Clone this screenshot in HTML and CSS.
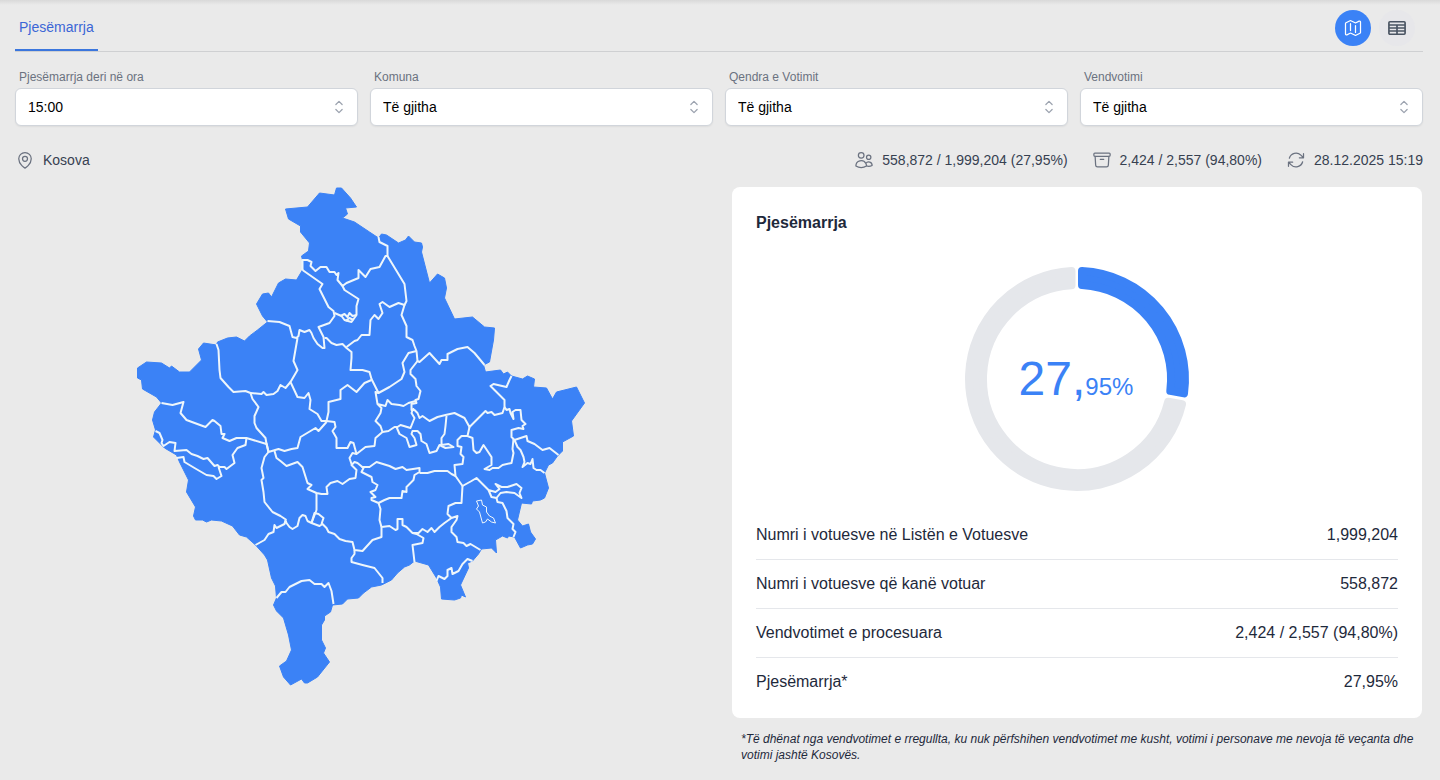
FILE: index.html
```html
<!DOCTYPE html>
<html lang="sq">
  <head>
    <meta charset="UTF-8" />
    <meta name="viewport" content="width=device-width, initial-scale=1.0" />
    <title>Pjesëmarrja</title>
    <link rel="stylesheet" href="styles.css">
  </head>
  <body>
    <div class="page">
      <header class="topbar">
        <nav class="tabs">
          <a href="#" class="tab active">Pjesëmarrja</a>
        </nav>
        <div class="view-buttons">
          <button type="button" class="view-btn active" aria-label="Harta">
            <svg class="icon" viewBox="0 0 24 24"><path d="M9 6.75V15m6-6v8.25m.503 3.498 4.875-2.437c.381-.19.622-.58.622-1.006V4.82c0-.836-.88-1.38-1.628-1.006l-3.869 1.934c-.317.159-.69.159-1.006 0L9.503 3.252a1.125 1.125 0 0 0-1.006 0L3.622 5.689C3.24 5.88 3 6.27 3 6.695V19.18c0 .836.88 1.38 1.628 1.006l3.869-1.934c.317-.159.69-.159 1.006 0l4.994 2.497c.317.158.69.158 1.006 0Z" /></svg>
          </button>
          <button type="button" class="view-btn table-btn" aria-label="Tabela">
            <svg class="icon" viewBox="0 0 24 24"><path d="M3.5 4.5h17a1.2 1.2 0 0 1 1.2 1.2v12.6a1.2 1.2 0 0 1-1.2 1.2h-17a1.2 1.2 0 0 1-1.2-1.2V5.7a1.2 1.2 0 0 1 1.2-1.2ZM2.5 8.4h19M2.500 12h19M2.500 15.6h19M12 8.4v11" /></svg>
          </button>
        </div>
      </header>

      <form class="filters">
        <div class="field">
          <label for="ora">Pjesëmarrja deri në ora</label>
          <div class="select-wrap">
            <select id="ora"><option>15:00</option></select>
            <svg class="icon chevron" viewBox="0 0 24 24"><path d="M8.25 15 12 18.75 15.75 15m-7.5-6L12 5.25 15.75 9" /></svg>
          </div>
        </div>
        <div class="field">
          <label for="komuna">Komuna</label>
          <div class="select-wrap">
            <select id="komuna"><option>Të gjitha</option></select>
            <svg class="icon chevron" viewBox="0 0 24 24"><path d="M8.25 15 12 18.75 15.75 15m-7.5-6L12 5.25 15.75 9" /></svg>
          </div>
        </div>
        <div class="field">
          <label for="qendra">Qendra e Votimit</label>
          <div class="select-wrap">
            <select id="qendra"><option>Të gjitha</option></select>
            <svg class="icon chevron" viewBox="0 0 24 24"><path d="M8.25 15 12 18.75 15.75 15m-7.5-6L12 5.25 15.75 9" /></svg>
          </div>
        </div>
        <div class="field">
          <label for="vendvotimi">Vendvotimi</label>
          <div class="select-wrap">
            <select id="vendvotimi"><option>Të gjitha</option></select>
            <svg class="icon chevron" viewBox="0 0 24 24"><path d="M8.25 15 12 18.75 15.75 15m-7.5-6L12 5.25 15.75 9" /></svg>
          </div>
        </div>
      </form>

      <div class="info">
        <div class="info-item place">
          <svg class="icon" viewBox="0 0 24 24"><path d="M15 10.5a3 3 0 1 1-6 0 3 3 0 0 1 6 0Z" /><path d="M19.5 10.5c0 7.142-7.5 11.25-7.5 11.25S4.5 17.642 4.5 10.5a7.5 7.5 0 1 1 15 0Z" /></svg>
          <span>Kosova</span>
        </div>
        <div class="info-item">
          <svg class="icon" viewBox="0 0 24 24"><path d="M15 19.128a9.38 9.38 0 0 0 2.625.372 9.337 9.337 0 0 0 4.121-.952 4.125 4.125 0 0 0-7.533-2.493M15 19.128v-.003c0-1.113-.285-2.16-.786-3.07M15 19.128v.106A12.318 12.318 0 0 1 8.624 21c-2.331 0-4.512-.645-6.374-1.766l-.001-.109a6.375 6.375 0 0 1 11.964-3.07M12 6.375a3.375 3.375 0 1 1-6.75 0 3.375 3.375 0 0 1 6.75 0Zm8.25 2.25a2.625 2.625 0 1 1-5.25 0 2.625 2.625 0 0 1 5.25 0Z" /></svg>
          <span>558,872 / 1,999,204 (27,95%)</span>
        </div>
        <div class="info-item">
          <svg class="icon" viewBox="0 0 24 24"><path d="m20.25 7.5-.625 10.632a2.25 2.25 0 0 1-2.247 2.118H6.622a2.25 2.25 0 0 1-2.247-2.118L3.75 7.5M10 11.25h4M3.375 7.5h17.25c.621 0 1.125-.504 1.125-1.125v-1.5c0-.621-.504-1.125-1.125-1.125H3.375c-.621 0-1.125.504-1.125 1.125v1.5c0 .621.504 1.125 1.125 1.125Z" /></svg>
          <span>2,424 / 2,557 (94,80%)</span>
        </div>
        <div class="info-item">
          <svg class="icon" viewBox="0 0 24 24"><path d="M16.023 9.348h4.992v-.001M2.985 19.644v-4.992m0 0h4.992m-4.993 0 3.181 3.183a8.25 8.25 0 0 0 13.803-3.7M4.031 9.865a8.25 8.25 0 0 1 13.803-3.7l3.181 3.182m0-4.991v4.99" /></svg>
          <span>28.12.2025 15:19</span>
        </div>
      </div>

      <main class="content">
        <div class="map">
          <svg viewBox="137 187 449 500" role="img" aria-label="Harta e Kosovës">
            <path class="land" d="M337 188L342 188 351 198 357 207 346 208 348 214 343 218 355 222 370 232 379 238 382 234 387 235 399 243 406 240 409 236 415 242 422 243 423 247 422 252 430 283 438 274 445 278 447 288 445 298 455 319 473 317 485 327 495 328 494 340 490 362 484 365 486 372 501 370 504 374 508 372 512 376 523 379 528 376 535 379 534 387 547 388 553 399 557 392 577 387 585 403 572 421 574 436 563 442 563 451 558 456 553 463 549 465 545 473 549 488 545 498 541 500 533 501 532 504 522 503 518 520 523 526 529 524 531 532 536 539 533 544 528 545 521 548 515 537 509 536 508 538 503 536 496 540 497 553 492 548 482 549 479 554 473 561 468 563 469 568 461 585 466 597 462 595 461 598 455 600 442 599 441 587 437 578 429 565 415 561 410 565 405 567 398 573 392 580 382 585 372 587 364 593 359 598 348 599 343 604 333 605 331 612 325 616 325 620 322 625 322 640 326 648 324 653 330 662 318 677 308 683 305 683 302 679 291 685 284 677 280 666 287 661 292 650 289 635 284 618 277 611 274 605 277 598 276 586 272 578 268 560 265 555 256 545 247 537 240 535 233 526 222 521 212 520 207 522 203 520 196 520 194 516 196 507 187 492 189 480 180 462 177 455 165 448 154 437 156 430 153 420 155 412 162 403 157 397 143 389 142 380 138 378 138 368 147 362 162 363 170 368 172 366 180 372 190 372 202 360 199 349 204 343 217 345 218 342 228 338 237 337 245 341 250 336 258 330 268 322 263 316 257 304 263 294 269 293 272 297 279 283 286 279 297 280 303 270 303 260 302 256 309 251 310 243 301 232 301 226 289 219 286 209 308 207 320 193 335 195Z" />
            <g class="borders">
              <path d="M303 270V260L308 260 312 262 311 266 316 271 321 267 327 267 330 272 335 272 337 275 339 273 338 280 343 286 347 283 359 278 359 270 366 277 371 269 380 267 386 256 388 256V246L380 242 379 237" />
              <path d="M388 256L405 284 407 301 405 305 402 304 399 303 390 307 383 302 380 304 383 313 379 319 375 315 371 320 370 335 362 335 358 340 355 341 347 347" />
              <path d="M405 305L402 315 407 326 407 337 413 340 415 346 417 351 418 361 420 362 430 353 440 364 442 360 448 360 448 354 458 349 468 347 475 353 485 365" />
              <path d="M343 286L345 290 359 299 357 306 357 315 352 322 345 320 342 316 335 313" />
              <path d="M341 316L345 314 348 317 350 313 353 316 357 315M346 321L350 318 354 320" />
              <path d="M303 270L323 284 320 289 329 307 334 311 335 316 330 323 319 327 324 337 325 348 323 348 318 344 314 338 312 333 310 330 305 332 300 330 299 336 297 338 293 337 290 326 280 322 268 321" />
              <path d="M325 338L327 338 332 343 337 345 343 344 347 348 352 352 352 358 351 370 363 370 370 372 372 379 379 393 390 387 402 379 405 372 403 363 409 353 417 351" />
              <path d="M418 361L411 370 411 374 416 379 417 386 421 391 419 399 416 400 417 403 412 404 412 410 415 410 418 413 420 418 423 416 430 421 438 417 446 415 455 413 465 418 470 427 477 420 486 411 488 413 492 412 495 415 503 413 505 407 505 400 491 386 494 384 507 387 510 380 512 376" />
              <path d="M505 407L507 410 510 409 511 413 514 419 513 412 516 410 521 410 522 420 526 424 523 426 524 429 519 428 512 430 512 437 515 440 527 436 528 441 535 444 543 450 550 448 559 455" />
              <path d="M514 439L513 449 514 453 512 463 503 465 499 468 493 468 490 470 485 469 492 465 492 457 484 445 480 452 477 453 474 450 473 438 468 436 470 427" />
              <path d="M515 440L518 447 521 450 524 457 525 462 523 467 528 463 531 464 533 459 534 468 537 470 541 470 545 473" />
              <path d="M468 436L462 436 458 440 458 446 462 447 461 454 464 457 463 464 455 465 456 476 463 486 472 481 477 478 489 490 496 492 500 489 496 484 502 487 508 487 517 484 522 488 520 493 522 498 515 493 507 492 501 493 497 498 492 497 489 490" />
              <path d="M497 498L498 502 503 503 507 511 508 518 514 524 513 529 516 532 514 537" />
              <path class="enclave" d="M477 501L482 500 483 505 487 507 487 512 490 516 494 518 496 523 492 522 488 519 486 522 483 523 480 512 477 509 479 506Z" />
              <path d="M463 486L462 503 456 503 449 506 448 514 452 518 458 516 457 520 452 527 452 532 457 537 458 542 464 543 467 546 471 544 481 550" />
              <path d="M452 518L445 523 440 527 435 532 432 528 428 532 423 529 419 533 413 533 407 527 403 525 403 519 398 519 398 529 396 530 390 526 382 527 382 537 373 540 363 551 355 550 353 542 346 541 340 539 335 534 329 532 327 528 323 524 320 526 312 523" />
              <path d="M413 533L417 534 424 538 423 543 413 545 415 562" />
              <path d="M355 550L355 554 352 558 352 562 363 565 375 568 383 578 383 583" />
              <path d="M277 598L282 592 286 592 290 587 302 581 310 580 315 584 322 584 325 587 329 583 332 591 334 604" />
              <path d="M256 545L265 540 269 534 274 532 275 525 277 528 285 524 286 520 287 523 290 527 293 529 298 526 300 518 303 515 306 516 308 521 312 523 315 513 319 514 324 518 322 524M287 520L281 516 273 512 265 502 264 492 262 480 264 478 262 468 265 457 269 452" />
              <path d="M382 527L380 520 381 509 379 503 372 500 372 498 376 497 371 492 376 490 378 485 373 482 372 477 362 472 364 468 358 463 355 462 352 465 357 470 356 478 350 479 343 484 338 481 331 483 327 487 328 494 322 494 317 493 308 489 312 485 308 483 303 467 298 462 287 466 281 461 277 458 275 451" />
              <path d="M379 503L385 500 390 498 402 498 403 491 407 492 407 487 414 480 415 475 420 472 420 468 407 470 403 467 396 469 390 466 377 462 370 467 362 467" />
              <path d="M420 473L428 473 435 471 448 471 452 474 456 476" />
              <path d="M352 464L350 458 353 453 357 454 366 447 375 446 376 438 383 432 389 431 395 427 398 427 401 425 411 428 415 418 412 413 414 408" />
              <path d="M383 432L381 426 376 421 381 413 382 408 378 404 376 392 379 393M378 404L386 406 388 400 392 404 400 405 404 406 409 403 416 401" />
              <path d="M397 427L400 434 407 438 410 447 417 445 415 438 412 434 413 431 418 431 421 434 422 441 427 444 430 453 437 451 440 445 446 448 454 447 449 444 442 445 442 438 445 434 446 426 447 416" />
              <path d="M372 380L365 383 357 392 348 385 341 390 341 399 329 402 329 412 327 421 322 421 318 414 310 409 311 400 309 393 305 398 298 397 291 382 298 370 294 361 298 338" />
              <path d="M327 421L335 422 336 427 333 431 337 438 337 448 348 448 351 442 354 443 357 454M327 422L319 431 316 428 301 437 298 448 292 449 285 451 279 449 269 452 267 443" />
              <path d="M317 493L317 510 312 523" />
              <path d="M269 452L267 444 266 438 257 428 255 423 255 416 259 407 253 399 251 393 246 391 234 392 229 387 221 378 220 370 219 350 217 344" />
              <path d="M251 393L262 394 264 392 267 395 274 394 278 391 281 385 286 388 291 382" />
              <path d="M267 444L247 438 237 438 230 441 223 438 225 434 222 434 221 426 215 421 213 420 206 427 187 420 181 413 184 402 173 405 162 403" />
              <path d="M247 438L246 445 238 448 233 455 235 463 227 469 225 467 220 467 218 465 215 466 208 458 204 459 198 456 192 454 187 450 175 451 176 443 170 442 164 446 162 443 163 440 160 433 156 431" />
              <path d="M219 467L222 476 217 479 214 476 207 475 195 468 185 462 184 457 177 458" />
              <path d="M473 561L468 559 463 564 459 571 453 574 452 568 448 570 448 576 445 579 439 576 437 581" />
            </g>
          </svg>
        </div>

        <div class="side">
          <section class="card">
            <h2>Pjesëmarrja</h2>
            <svg class="donut" viewBox="-112 -112 224 224" role="img" aria-label="27,95%">
              <path class="rest" d="M105 25.3A108 108 0 1 1 -5.5 -107.9L-5.5 -93.8A94 94 0 1 0 91.2 22.7Z" />
              <path class="voted" d="M5 -107.9A108 108 0 0 1 107 14.4L93.3 11.9A94 94 0 0 0 5 -93.9Z" />
              <text x="-1" y="16" text-anchor="middle"><tspan class="whole">27,</tspan><tspan class="decimals">95%</tspan></text>
            </svg>
            <table class="stats">
              <tbody>
                <tr>
                  <th scope="row">Numri i votuesve në Listën e Votuesve</th>
                  <td>1,999,204</td>
                </tr>
                <tr>
                  <th scope="row">Numri i votuesve që kanë votuar</th>
                  <td>558,872</td>
                </tr>
                <tr>
                  <th scope="row">Vendvotimet e procesuara</th>
                  <td>2,424 / 2,557 (94,80%)</td>
                </tr>
                <tr>
                  <th scope="row">Pjesëmarrja*</th>
                  <td>27,95%</td>
                </tr>
              </tbody>
            </table>
          </section>
          <p class="note">*Të dhënat nga vendvotimet e rregullta, ku nuk përfshihen vendvotimet me kusht, votimi i personave me nevoja të veçanta dhe votimi jashtë Kosovës.</p>
        </div>
      </main>
    </div>
  </body>
</html>
```
FILE: styles.css
```css
* {
  margin: 0;
  padding: 0;
  box-sizing: border-box;
}

body {
  font-family: "Liberation Sans", Arial, sans-serif;
  font-size: 14px;
  line-height: 20px;
  color: #1e293b;
  background: #eaeaea;
}

.page {
  padding: 0 17px 16px 15px;
  background: linear-gradient(#d9d9d9, #eaeaea 5px);
}

.icon {
  width: 20px;
  height: 20px;
  flex-shrink: 0;
  fill: none;
  stroke: currentColor;
  stroke-width: 1.5;
  stroke-linecap: round;
  stroke-linejoin: round;
}

/* top bar */
.topbar {
  display: flex;
  justify-content: space-between;
  height: 52px;
  border-bottom: 1px solid #cfd0d2;
}

.tabs {
  display: flex;
}

.tab {
  height: 51px;
  padding: 17px 4px 0;
  color: #3b66d6;
  text-decoration: none;
}

.tab.active {
  border-bottom: 2px solid #3b76dd;
}

.view-buttons {
  display: flex;
  gap: 8px;
  padding: 10px 8px 0 0;
}

.view-btn {
  display: flex;
  align-items: center;
  justify-content: center;
  width: 36px;
  height: 36px;
  border: none;
  border-radius: 50%;
  background: #e7e7ea;
  color: #4b5563;
  cursor: pointer;
}

.view-btn.active {
  background: #3b82f6;
  color: white;
}

.table-btn .icon {
  stroke-width: 2;
}

/* filters */
.filters {
  display: grid;
  grid-template-columns: repeat(4, 1fr);
  gap: 12px;
  margin-top: 17px;
}

.field label {
  display: block;
  margin-bottom: 3px;
  padding-left: 4px;
  font-size: 12px;
  line-height: 16px;
  color: #6b7280;
}

.select-wrap {
  position: relative;
}

.select-wrap select {
  display: block;
  width: 100%;
  height: 38px;
  padding: 0 40px 0 12px;
  border: 1px solid #d1d5db;
  border-radius: 6px;
  box-shadow: 0 1px 2px rgba(0, 0, 0, 0.06);
  background: white;
  color: black;
  font: inherit;
  appearance: none;
}

.chevron {
  position: absolute;
  top: 9px;
  right: 9px;
  color: #9ca3af;
  pointer-events: none;
}

/* info line */
.info {
  display: flex;
  gap: 24px;
  margin-top: 24px;
}

.info-item {
  display: flex;
  align-items: center;
  gap: 8px;
  color: #374151;
}

.info-item .icon {
  color: #6b7280;
}

.place {
  margin-right: auto;
}

/* map and results */
.content {
  display: grid;
  grid-template-columns: 1fr 1fr;
  gap: 24px;
  margin-top: 17px;
}

.map svg {
  display: block;
  width: 100%;
  height: 500px;
}

.land {
  fill: #3b82f6;
  stroke: #3b82f6;
  stroke-linejoin: round;
}

.borders path {
  fill: none;
  stroke: #eef6fb;
  stroke-width: 2;
  stroke-linejoin: round;
}

.borders .enclave {
  stroke-width: 1;
}

.side {
  padding: 0 1px;
}

.card {
  padding: 24px 24px 12px;
  border-radius: 8px;
  background: white;
}

.card h2 {
  font-size: 16px;
  line-height: 24px;
}

.donut {
  display: block;
  width: 224px;
  height: 224px;
  margin: 32px auto 20px;
  overflow: visible;
}

.donut path {
  stroke-width: 8;
  stroke-linejoin: round;
}

.rest {
  fill: #e5e7eb;
  stroke: #e5e7eb;
}

.voted {
  fill: #3b82f6;
  stroke: #3b82f6;
}

.donut text {
  fill: #3b82f6;
}

.whole {
  font-size: 48px;
}

.decimals {
  font-size: 24px;
}

.stats {
  width: 100%;
  border-collapse: collapse;
  font-size: 16px;
  line-height: 24px;
}

.stats th,
.stats td {
  padding: 12px 0;
  font-weight: normal;
  text-align: left;
}

.stats td {
  text-align: right;
}

.stats tr + tr {
  border-top: 1px solid #e5e7eb;
}

.note {
  padding: 13px 0 0 9px;
  font-size: 12px;
  line-height: 16px;
  font-style: italic;
}
```
